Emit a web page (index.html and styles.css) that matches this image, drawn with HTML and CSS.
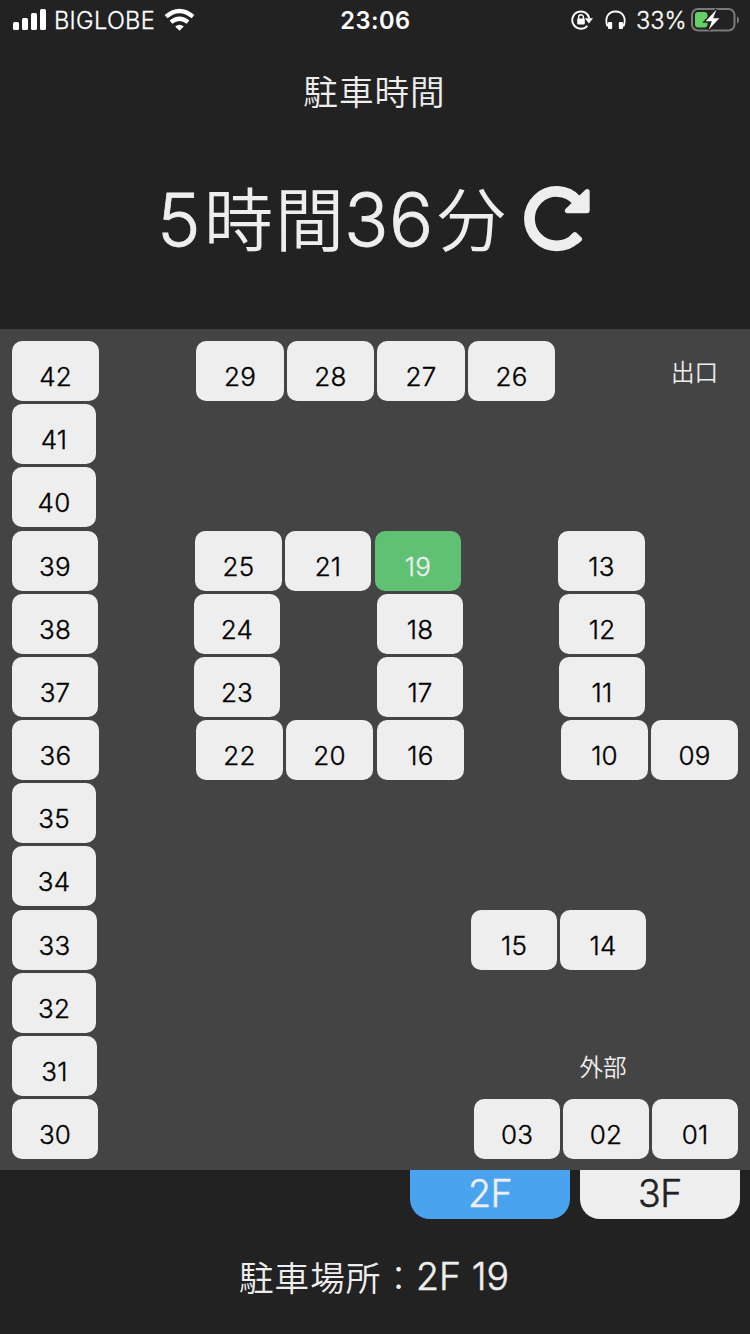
FILE: index.html
```html
<!DOCTYPE html>
<html lang="ja">
<head>
<meta charset="utf-8">
<title>駐車時間</title>
<link rel="stylesheet" href="styles.css">
</head>
<body>
<div class="app">
  <header class="status">
    <div class="status-left">
      <svg class="signal" width="34" height="23" viewBox="0 0 34 23" fill="#fff"><rect x="0" y="14" width="6" height="8" rx="1.6"/><rect x="9" y="10" width="6" height="12" rx="1.6"/><rect x="18" y="5" width="6" height="17" rx="1.6"/><rect x="27" y="1" width="6" height="21" rx="1.6"/></svg>
      <span class="carrier">BIGLOBE</span>
      <svg class="wifi" width="31" height="23" viewBox="0 0 31 23"><g fill="none" stroke="#fff" stroke-width="4.2"><path d="M2 8.7Q15.5-2.7 29 8.7"/><path d="M7 14.2Q15.5 7.3 24 14.2"/></g><path fill="#fff" d="M11.2 18.4Q15.500 15.200 19.800 18.400L15.500 22.800Z"/></svg>
    </div>
    <div class="clock">23:06</div>
    <div class="status-right">
      <svg class="lock" width="22" height="20" viewBox="0 0 22 20"><path fill="none" stroke="#fff" stroke-width="1.9" d="M16.3 15.800A8.600 8.600 0 1 1 18.300 8.400"/><path fill="#fff" d="M13.800 8.200H22L17.900 13.500Z"/><rect x="6.200" y="8.600" width="7.600" height="5.800" rx=".8" fill="#fff"/><path fill="none" stroke="#fff" stroke-width="1.400" d="M7.600 9V7.200a2.400 2.400 0 0 1 4.800 0V9"/></svg>
      <svg class="phones" width="21" height="20" viewBox="0 0 21 20"><path fill="none" stroke="#fff" stroke-width="1.800" d="M2.600 16.500C-.8 8 3 1.500 10.500 1.500S21.800 8 18.400 16.500"/><rect x="3" y="12" width="4.200" height="7" rx="1" fill="#fff"/><rect x="13.800" y="12" width="4.200" height="7" rx="1" fill="#fff"/></svg>
      <span class="percent">33%</span>
      <svg class="battery" width="49" height="24" viewBox="0 0 49 24"><rect x="1" y="1" width="42.500" height="21.500" rx="6" fill="none" stroke="#7b7b7b" stroke-width="2"/><path fill="#7b7b7b" d="M46 8.300q2 1 2 3.700t-2 3.700z"/><rect x="4" y="4" width="12.500" height="15.500" rx="3.200" fill="#65d063"/><path fill="#fff" stroke="#222" stroke-width="3" paint-order="stroke" d="M25.500 1.500L14.700 13.300h6.200L17.600 21.800 28.400 10.200h-6.300z"/></svg>
    </div>
  </header>

  <section class="timer">
    <h1 class="timer-title">駐車時間</h1>
    <div class="timer-row">
      <div class="timer-value"><span class="num">5</span><span class="kanji kanji-hours">時間</span><span class="num num-minutes">36</span><span class="kanji">分</span></div>
      <svg class="reload" width="67" height="66" viewBox="0 0 67 66"><path fill="none" stroke="#eee" stroke-width="10.800" d="M53 14.600A27.200 27.200 0 1 0 52.300 51.500"/><path fill="#eee" d="M48.800 46.900q1.900-1.900 3.800-.1l4.900 4.700q1.600 1.700-.1 3.400L53 58.400l-7.500-8z"/><path fill="#eee" d="M43.700 27.200c-2.900 0-3.800-2.700-2-4.500L61.400 3.800c1.800-1.700 4.300-.7 4.300 1.800v19c0 1.600-1 2.600-2.600 2.600z"/></svg>
    </div>
  </section>

  <main class="map">
    <div class="row row-42"><b class="slot">42</b><i></i><b class="slot">29</b><b class="slot">28</b><b class="slot">27</b><b class="slot">26</b><i></i><span class="label">出口</span></div>
    <div class="row row-narrow"><b class="slot">41</b></div>
    <div class="row row-narrow"><b class="slot">40</b></div>
    <div class="row row-39"><b class="slot">39</b><i></i><b class="slot">25</b><b class="slot">21</b><b class="slot slot-active slot-inset">19</b><i></i><b class="slot">13</b></div>
    <div class="row row-38"><b class="slot">38</b><i></i><b class="slot">24</b><i></i><b class="slot">18</b><i></i><b class="slot">12</b></div>
    <div class="row row-38"><b class="slot">37</b><i></i><b class="slot">23</b><i></i><b class="slot">17</b><i></i><b class="slot">11</b></div>
    <div class="row row-36"><b class="slot">36</b><i></i><b class="slot">22</b><b class="slot">20</b><b class="slot slot-inset">16</b><i></i><b class="slot">10</b><b class="slot">09</b></div>
    <div class="row row-narrow"><b class="slot">35</b></div>
    <div class="row row-narrow"><b class="slot">34</b></div>
    <div class="row row-33"><b class="slot">33</b><i></i><b class="slot">15</b><b class="slot">14</b></div>
    <div class="row row-narrow"><b class="slot">32</b></div>
    <div class="row row-31"><b class="slot">31</b><i></i><span class="label">外部</span></div>
    <div class="row row-30"><b class="slot">30</b><i></i><b class="slot">03</b><b class="slot">02</b><b class="slot">01</b></div>
  </main>

  <nav class="tabs"><div class="tab tab-active">2F</div><div class="tab">3F</div></nav>
  <footer class="place"><span class="place-label">駐車場所<span class="colon">：</span></span><span class="place-value">2F 19</span></footer>
</div>
</body>
</html>
```
FILE: styles.css
```css
* { box-sizing: border-box; }
body { margin: 0; background: #222; color: #eee; font-family: Inter, "Noto Sans CJK JP", sans-serif; }
.app { width: 750px; height: 1334px; display: flex; flex-direction: column; overflow: hidden; }
svg { display: block; flex: none; }

.status { height: 40px; display: grid; grid-template-columns: 250px 250px 250px; color: #fff; line-height: 40px; white-space: nowrap; }
.status-left { display: flex; padding-left: 13px; }
.signal { margin-top: 8px; }
.carrier { width: 99px; margin: 1px 11px 0 7px; font-size: 23.6px; font-weight: 300; letter-spacing: 0.3px; -webkit-text-stroke: 0.3px #fff; }
.wifi { margin-top: 8px; }
.clock { text-align: center; font-size: 23.6px; font-weight: 600; letter-spacing: 0.5px; padding: 1px 0 0 1px; }
.status-right { display: flex; padding-left: 71px; }
.lock { margin-top: 10px; }
.phones { margin: 10px 0 0 12px; }
.percent { width: 50px; margin: 1px 0 0 10px; font-size: 23.6px; font-weight: 300; -webkit-text-stroke: 0.3px #fff; }
.battery { margin: 8px 0 0 5px; }

.timer { height: 289px; display: flex; flex-direction: column; }
.timer-title { margin: 0; padding: 24px 1px 0 0; font-family: "Noto Sans CJK JP", sans-serif; font-size: 34.6px; font-weight: 350; letter-spacing: 1px; line-height: 52px; text-align: center; }
.timer-row { display: flex; padding: 56px 0 0 157px; height: 158px; }
.timer-value { display: flex; width: 353px; line-height: 95px; font-size: 73.5px; font-weight: 300; white-space: nowrap; }
.timer-value .num { width: 47px; -webkit-text-stroke: 0.8px #eee; }
.timer-value .num-minutes { width: 93px; margin-left: -2px; letter-spacing: 0.5px; }
.timer-value .kanji { font-family: "Noto Sans CJK JP", sans-serif; font-weight: 350; font-size: 69px; letter-spacing: 2px; line-height: 89px; }
.timer-value .kanji-hours { width: 142px; }
.reload { margin: 14px 0 0 14px; }

.map { height: 841px; padding: 12px; background: #444; display: grid; grid-template-rows: repeat(13, 60px); row-gap: 3.18px; align-content: start; }
.row { display: grid; column-gap: 3px; }
.row-42 { grid-template-columns: 87px 91px 88px 87px 88px 87px 90px 87px; }
.row-narrow { grid-template-columns: 84px; }
.row-39 { grid-template-columns: 86px 91px 87px 86px 87px 91px 87px; }
.row-38 { grid-template-columns: 86px 90px 86px 91px 86px 90px 86px; }
.row-36 { grid-template-columns: 87px 91px 87px 87px 88px 91px 87px 87px; }
.row-33 { grid-template-columns: 85px 368px 86px 86px; }
.row-31 { grid-template-columns: 85px 457px 86px; }
.row-30 { grid-template-columns: 86px 370px 86px 86px 86px; }
.slot { height: 60px; padding-top: 12px; border-radius: 10px; background: #eee; color: #000; font-size: 26px; font-weight: 300; line-height: 48px; text-align: center; letter-spacing: 0.2px; -webkit-text-stroke: 0.35px currentColor; }
.slot-active { background: #60c175; color: #eee; }
.slot-inset { margin-left: 1px; }
.label { font-family: "Noto Sans CJK JP", sans-serif; font-size: 23.6px; font-weight: 350; line-height: 60px; text-align: center; }

.tabs { height: 49px; display: flex; justify-content: flex-end; gap: 10px; padding-right: 10px; }
.tab { width: 160px; height: 49px; border-radius: 0 0 20px 20px; background: #eee; color: #222; font-size: 37.5px; font-weight: 300; letter-spacing: -0.5px; line-height: 48px; text-align: center; -webkit-text-stroke: 0.5px currentColor; }
.tab-active { background: #4aa3ef; color: #eee; }
.place { display: flex; height: 115px; padding: 31px 0 0 239px; line-height: 54px; font-size: 37.5px; font-weight: 300; letter-spacing: 0; white-space: nowrap; }
.place-label { width: 177px; font-family: "Noto Sans CJK JP", sans-serif; font-weight: 350; font-size: 34.6px; line-height: 52px; letter-spacing: 1px; }
.colon { font-weight: 300; }
.place-value { -webkit-text-stroke: 0.5px #eee; }
```
